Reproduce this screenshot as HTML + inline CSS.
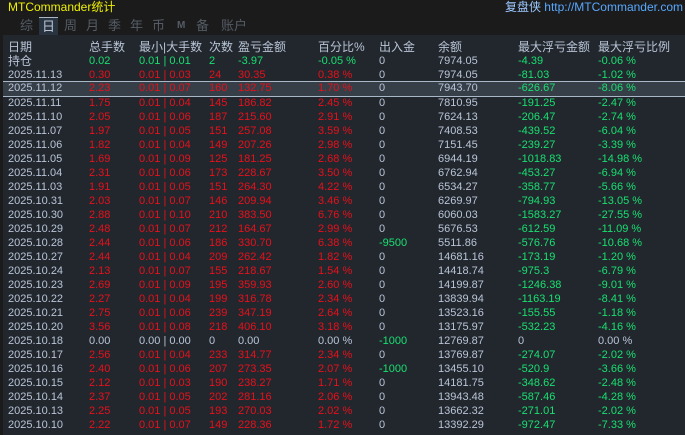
<!DOCTYPE html>
<html><head><meta charset="utf-8"><style>
*{margin:0;padding:0;box-sizing:border-box}
body{width:685px;height:435px;background:#1b1b1b;font-family:"Liberation Sans","Noto Sans CJK SC",sans-serif;font-size:11px;color:#b9c4d6;position:relative;overflow:hidden}
.title{position:absolute;left:8px;top:-2px;color:#f0f000;font-size:12px}
.url{position:absolute;right:2px;top:-2px;color:#58a8ff;font-size:12px}
.url b{font-weight:normal;color:#9cc8ff}
.tabs{position:absolute;left:0;top:17px;height:18px;width:300px;font-size:13px;color:#555c66}
.tabs span{position:absolute;top:0;line-height:18px}
.tabs .sel{background:#2a3340;color:#b9c4d6;padding:0 3px;margin-left:-3px}
.tbl{position:absolute;left:3px;top:35px;width:682px;height:400px;background:#22272e}
.r{position:absolute;left:0;width:682px;height:14px;line-height:14px;white-space:nowrap}
.r span{position:absolute;top:0}
.r span:nth-child(1){left:5px}
.r span:nth-child(2){left:86px}
.r span:nth-child(3){left:136px}
.r span:nth-child(4){left:206px}
.r span:nth-child(5){left:235px}
.r span:nth-child(6){left:315px}
.r span:nth-child(7){left:376px}
.r span:nth-child(8){left:435px}
.r span:nth-child(9){left:515px}
.r span:nth-child(10){left:595px}
.h{font-size:12px}
.R{color:#e8101a}.G{color:#18e070}.W{color:#b9c4d6}
.sel{background:#363e48;border-top:1px solid #a8b8c8;border-bottom:1px solid #a8b8c8;line-height:12px}
.R span:nth-child(1),.G span:nth-child(1){color:#b9c4d6}
.R span:nth-child(7),.R span:nth-child(8),.G span:nth-child(8){color:#b9c4d6}
.R span:nth-child(9),.R span:nth-child(10){color:#18e070}
.g7 span:nth-child(7){color:#18e070!important}
.G span:nth-child(7){color:#b9c4d6}
</style></head><body>
<div class="title">MTCommander统计</div>
<div class="url"><b>复盘侠</b> http://MTCommander.com</div>
<div class="tabs"><span style="left:20px">综</span><span class="sel" style="left:42px">日</span><span style="left:64px">周</span><span style="left:86px">月</span><span style="left:108px">季</span><span style="left:130px">年</span><span style="left:152px">币</span><span style="left:177px;font-size:10px;font-weight:bold">M</span><span style="left:196px">备</span><span style="left:221px">账户</span></div>
<div class="tbl">
<div class="r h W" style="top:5px"><span>日期</span><span>总手数</span><span>最小|大手数</span><span>次数</span><span>盈亏金额</span><span>百分比%</span><span>出入金</span><span>余额</span><span>最大浮亏金额</span><span>最大浮亏比例</span></div>
<div class="r G" style="top:19px;color:#18e070"><span style="font-size:12px">持仓</span><span>0.02</span><span>0.01 | 0.01</span><span>2</span><span>-3.97</span><span>-0.05 %</span><span>0</span><span>7974.05</span><span>-4.39</span><span>-0.06 %</span></div>
<div class="r R" style="top:33px"><span>2025.11.13</span><span>0.30</span><span>0.01 | 0.03</span><span>24</span><span>30.35</span><span>0.38 %</span><span>0</span><span>7974.05</span><span>-81.03</span><span>-1.02 %</span></div>
<div class="r R sel" style="top:46px;height:16px"><span>2025.11.12</span><span>2.23</span><span>0.01 | 0.07</span><span>160</span><span>132.75</span><span>1.70 %</span><span>0</span><span>7943.70</span><span>-626.67</span><span>-8.06 %</span></div>
<div class="r R" style="top:61px"><span>2025.11.11</span><span>1.75</span><span>0.01 | 0.04</span><span>145</span><span>186.82</span><span>2.45 %</span><span>0</span><span>7810.95</span><span>-191.25</span><span>-2.47 %</span></div>
<div class="r R" style="top:75px"><span>2025.11.10</span><span>2.05</span><span>0.01 | 0.06</span><span>187</span><span>215.60</span><span>2.91 %</span><span>0</span><span>7624.13</span><span>-206.47</span><span>-2.74 %</span></div>
<div class="r R" style="top:89px"><span>2025.11.07</span><span>1.97</span><span>0.01 | 0.05</span><span>151</span><span>257.08</span><span>3.59 %</span><span>0</span><span>7408.53</span><span>-439.52</span><span>-6.04 %</span></div>
<div class="r R" style="top:103px"><span>2025.11.06</span><span>1.82</span><span>0.01 | 0.04</span><span>149</span><span>207.26</span><span>2.98 %</span><span>0</span><span>7151.45</span><span>-239.27</span><span>-3.39 %</span></div>
<div class="r R" style="top:117px"><span>2025.11.05</span><span>1.69</span><span>0.01 | 0.09</span><span>125</span><span>181.25</span><span>2.68 %</span><span>0</span><span>6944.19</span><span>-1018.83</span><span>-14.98 %</span></div>
<div class="r R" style="top:131px"><span>2025.11.04</span><span>2.31</span><span>0.01 | 0.06</span><span>173</span><span>228.67</span><span>3.50 %</span><span>0</span><span>6762.94</span><span>-453.27</span><span>-6.94 %</span></div>
<div class="r R" style="top:145px"><span>2025.11.03</span><span>1.91</span><span>0.01 | 0.05</span><span>151</span><span>264.30</span><span>4.22 %</span><span>0</span><span>6534.27</span><span>-358.77</span><span>-5.66 %</span></div>
<div class="r R" style="top:159px"><span>2025.10.31</span><span>2.03</span><span>0.01 | 0.07</span><span>146</span><span>209.94</span><span>3.46 %</span><span>0</span><span>6269.97</span><span>-794.93</span><span>-13.05 %</span></div>
<div class="r R" style="top:173px"><span>2025.10.30</span><span>2.88</span><span>0.01 | 0.10</span><span>210</span><span>383.50</span><span>6.76 %</span><span>0</span><span>6060.03</span><span>-1583.27</span><span>-27.55 %</span></div>
<div class="r R" style="top:187px"><span>2025.10.29</span><span>2.48</span><span>0.01 | 0.07</span><span>212</span><span>164.67</span><span>2.99 %</span><span>0</span><span>5676.53</span><span>-612.59</span><span>-11.09 %</span></div>
<div class="r R g7" style="top:201px"><span>2025.10.28</span><span>2.44</span><span>0.01 | 0.06</span><span>186</span><span>330.70</span><span>6.38 %</span><span>-9500</span><span>5511.86</span><span>-576.76</span><span>-10.68 %</span></div>
<div class="r R" style="top:215px"><span>2025.10.27</span><span>2.44</span><span>0.01 | 0.04</span><span>209</span><span>262.42</span><span>1.82 %</span><span>0</span><span>14681.16</span><span>-173.19</span><span>-1.20 %</span></div>
<div class="r R" style="top:229px"><span>2025.10.24</span><span>2.13</span><span>0.01 | 0.07</span><span>155</span><span>218.67</span><span>1.54 %</span><span>0</span><span>14418.74</span><span>-975.3</span><span>-6.79 %</span></div>
<div class="r R" style="top:243px"><span>2025.10.23</span><span>2.69</span><span>0.01 | 0.09</span><span>195</span><span>359.93</span><span>2.60 %</span><span>0</span><span>14199.87</span><span>-1246.38</span><span>-9.01 %</span></div>
<div class="r R" style="top:257px"><span>2025.10.22</span><span>2.27</span><span>0.01 | 0.04</span><span>199</span><span>316.78</span><span>2.34 %</span><span>0</span><span>13839.94</span><span>-1163.19</span><span>-8.41 %</span></div>
<div class="r R" style="top:271px"><span>2025.10.21</span><span>2.75</span><span>0.01 | 0.06</span><span>239</span><span>347.19</span><span>2.64 %</span><span>0</span><span>13523.16</span><span>-155.55</span><span>-1.18 %</span></div>
<div class="r R" style="top:285px"><span>2025.10.20</span><span>3.56</span><span>0.01 | 0.08</span><span>218</span><span>406.10</span><span>3.18 %</span><span>0</span><span>13175.97</span><span>-532.23</span><span>-4.16 %</span></div>
<div class="r W g7" style="top:299px"><span>2025.10.18</span><span>0.00</span><span>0.00 | 0.00</span><span>0</span><span>0.00</span><span>0.00 %</span><span>-1000</span><span>12769.87</span><span>0</span><span>0.00 %</span></div>
<div class="r R" style="top:313px"><span>2025.10.17</span><span>2.56</span><span>0.01 | 0.04</span><span>233</span><span>314.77</span><span>2.34 %</span><span>0</span><span>13769.87</span><span>-274.07</span><span>-2.02 %</span></div>
<div class="r R g7" style="top:327px"><span>2025.10.16</span><span>2.40</span><span>0.01 | 0.06</span><span>207</span><span>273.35</span><span>2.07 %</span><span>-1000</span><span>13455.10</span><span>-520.9</span><span>-3.66 %</span></div>
<div class="r R" style="top:341px"><span>2025.10.15</span><span>2.12</span><span>0.01 | 0.03</span><span>190</span><span>238.27</span><span>1.71 %</span><span>0</span><span>14181.75</span><span>-348.62</span><span>-2.48 %</span></div>
<div class="r R" style="top:355px"><span>2025.10.14</span><span>2.37</span><span>0.01 | 0.05</span><span>202</span><span>281.16</span><span>2.06 %</span><span>0</span><span>13943.48</span><span>-587.46</span><span>-4.28 %</span></div>
<div class="r R" style="top:369px"><span>2025.10.13</span><span>2.25</span><span>0.01 | 0.05</span><span>193</span><span>270.03</span><span>2.02 %</span><span>0</span><span>13662.32</span><span>-271.01</span><span>-2.02 %</span></div>
<div class="r R" style="top:383px"><span>2025.10.10</span><span>2.22</span><span>0.01 | 0.07</span><span>149</span><span>228.36</span><span>1.72 %</span><span>0</span><span>13392.29</span><span>-972.47</span><span>-7.33 %</span></div>
</div>
</body></html>
